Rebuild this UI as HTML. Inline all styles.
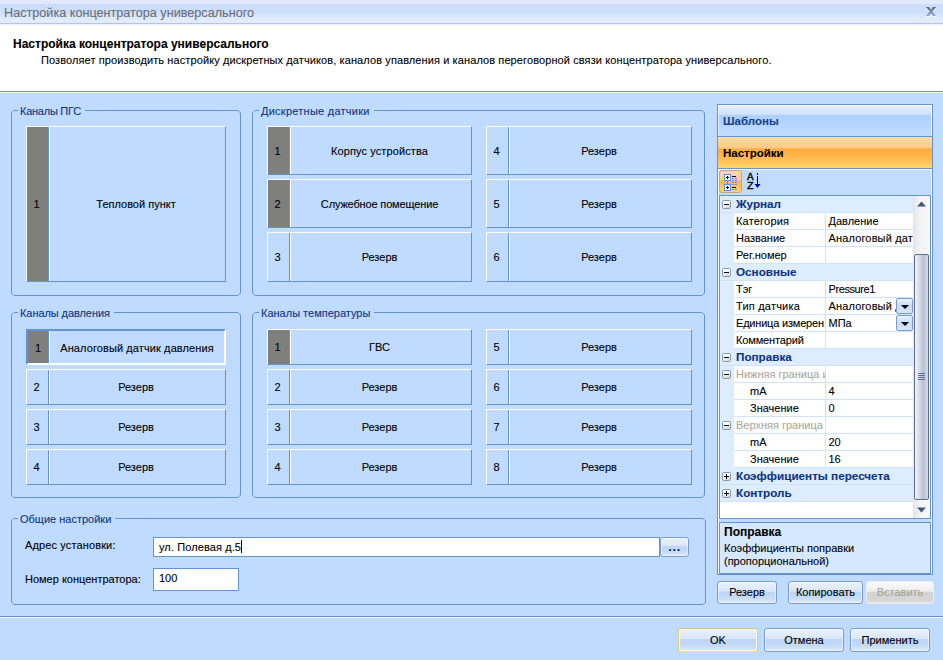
<!DOCTYPE html>
<html lang="ru"><head><meta charset="utf-8"><title>Настройка концентратора универсального</title>
<style>
html,body{margin:0;padding:0}
body{width:943px;height:660px;position:relative;overflow:hidden;background:#BFDBFF;font-family:"Liberation Sans",sans-serif;font-size:11px;color:#000;line-height:13px;-webkit-text-stroke:0.1px}
div,span{box-sizing:border-box}
.abs{position:absolute}
.t{position:absolute;white-space:nowrap}
.gb{position:absolute;border:1px solid #6593CF;border-radius:4px}
.gl{position:absolute;background:#BFDBFF;color:#10357C;white-space:nowrap;padding:0 4px 0 2px;height:13px}
.cb{position:absolute;border-style:solid;border-width:1px;border-color:#fff #6593CF #6593CF #fff}
.cb.sel{border-width:2px;border-color:#6593CF #fff #fff #6593CF}
.cb .n{position:absolute;left:0;top:0;bottom:0;width:22px;border-right:1px solid #6593CF;display:flex;align-items:center;justify-content:center;padding-right:2px}
.cb.sel .n{width:21px}
.cb .n.g{background:#7F807D}
.cb .x{position:absolute;left:22px;top:0;bottom:0;right:0;border-left:1px solid #fff;display:flex;align-items:center;justify-content:center;white-space:nowrap;padding-right:3px}
.cb.sel .x{left:21px;padding:2px 0 0 0}
.cb.sel .n{padding:2px 0 0 0}
.btn{position:absolute;border:1px solid #7B9CCB;border-radius:3px;background:linear-gradient(#EAF2FE 0%,#D9E6FA 44%,#BDD5F6 48%,#C5DAF8 75%,#DDE9FC 100%);display:flex;align-items:center;justify-content:center;white-space:nowrap;box-shadow:inset 0 0 0 1px rgba(255,255,255,.55)}
.row{position:absolute;left:0;width:193px;height:17px}
.cat{background:#DDECFE;color:#0E3482;font-weight:bold;font-size:11.7px}
.pm{position:absolute;left:2px;top:4px;width:9px;height:9px;border:1px solid #7F9DB9;border-radius:1.5px;background:linear-gradient(160deg,#fff 35%,#D8CDB4)}
.pm:before{content:"";position:absolute;left:1px;top:3px;width:5px;height:1px;background:#000}
.pm.p:after{content:"";position:absolute;left:3px;top:1px;width:1px;height:5px;background:#000}
.lab{position:absolute;left:14px;top:0;width:92px;height:17px;background:#fff;border-right:1px solid #D0E3FB;border-bottom:1px solid #D0E3FB;padding:2px 0 0 2px;overflow:hidden;white-space:nowrap}
.val{position:absolute;left:106px;top:0;width:87px;height:17px;background:#fff;border-bottom:1px solid #D0E3FB;padding:2px 0 0 2.5px;overflow:hidden;white-space:nowrap}
.lab.i{padding-left:16px}
.lab.d{color:#ACA899}
.dd{position:absolute;right:0px;top:0px;width:17px;height:16px;border:1px solid #7B9CCB;border-radius:2px;background:linear-gradient(#EAF2FE,#C7DBF9 50%,#D9E7FC)}
.dd:after{content:"";position:absolute;left:4px;top:6px;border:4px solid transparent;border-top-color:#000;border-bottom-width:0}
</style></head><body>

<div class="abs" style="left:0;top:0;width:943px;height:25px;background:linear-gradient(#E1E9FA 0,#E1E9FA 4px,#CBDDFA 4px,#CDDFFB 12px,#DFE9FB 18px,#E4ECFB 22px,#E4ECFB 23px,#A9C8F2 23px,#A9C8F2 24px,#E6F0FD 24px)"></div>
<div class="t" style="left:4px;top:6px;font-size:12.65px;line-height:15px;color:#6A6F78">Настройка концентратора универсального</div>
<svg class="abs" style="left:925px;top:6px" width="12" height="12" viewBox="0 0 12 12"><defs><linearGradient id="xg" x1="0" y1="0" x2="0" y2="1"><stop offset="0" stop-color="#5E5E5E"/><stop offset="0.35" stop-color="#7687A6"/><stop offset="1" stop-color="#8DA9D8"/></linearGradient></defs><path id="xp" d="M1 2h3l2 2.600 2-2.600h3l-3.500 4.500 3.500 4.500h-3l-2-2.600-2 2.600h-3l3.500-4.500z" fill="#fff"/><path d="M1 1h3l2 2.600 2-2.600h3l-3.500 4.500 3.500 4.500h-3l-2-2.600-2 2.600h-3l3.500-4.500z" fill="url(#xg)"/></svg>
<div class="abs" style="left:0;top:25px;width:943px;height:66px;background:#fff"></div>
<div class="abs" style="left:0;top:91px;width:943px;height:1px;background:#6593CF"></div>
<div class="abs" style="left:0;top:92px;width:943px;height:1px;background:#fff"></div>
<div class="t" style="left:13px;top:38px;font-weight:bold;font-size:12px">Настройка концентратора универсального</div>
<div class="t" style="left:41px;top:54px;letter-spacing:0.1px">Позволяет производить настройку дискретных датчиков, каналов упавления и каналов переговорной связи концентратора универсального.</div>
<div class="abs" style="left:0;top:616px;width:943px;height:1px;background:#6593CF"></div>
<div class="abs" style="left:0;top:617px;width:943px;height:1px;background:#fff"></div>
<svg class="abs" style="left:11px;top:110px" width="230" height="186" viewBox="0 0 230 186"><path d="M3.0 .5H227.0L229.5 3.0V183.0L227.0 185.5H3.0L.5 183.0V3.0Z" fill="none" stroke="#6593CF" stroke-width="1"/></svg>
<div class="gl" style="left:18px;top:105px;letter-spacing:-0.25px">Каналы ПГС</div>
<svg class="abs" style="left:252px;top:110px" width="453" height="186" viewBox="0 0 453 186"><path d="M3.0 .5H450.0L452.5 3.0V183.0L450.0 185.5H3.0L.5 183.0V3.0Z" fill="none" stroke="#6593CF" stroke-width="1"/></svg>
<div class="gl" style="left:259px;top:105px;letter-spacing:0.25px">Дискретные датчики</div>
<svg class="abs" style="left:11px;top:312px" width="230" height="186" viewBox="0 0 230 186"><path d="M3.0 .5H227.0L229.5 3.0V183.0L227.0 185.5H3.0L.5 183.0V3.0Z" fill="none" stroke="#6593CF" stroke-width="1"/></svg>
<div class="gl" style="left:18px;top:307px;letter-spacing:-0.07px">Каналы давления</div>
<svg class="abs" style="left:252px;top:312px" width="453" height="186" viewBox="0 0 453 186"><path d="M3.0 .5H450.0L452.5 3.0V183.0L450.0 185.5H3.0L.5 183.0V3.0Z" fill="none" stroke="#6593CF" stroke-width="1"/></svg>
<div class="gl" style="left:259px;top:307px;letter-spacing:0px">Каналы температуры</div>
<svg class="abs" style="left:11px;top:518px" width="695" height="87" viewBox="0 0 695 87"><path d="M3.0 .5H692.0L694.5 3.0V84.0L692.0 86.5H3.0L.5 84.0V3.0Z" fill="none" stroke="#6593CF" stroke-width="1"/></svg>
<div class="gl" style="left:18px;top:513px;letter-spacing:0px">Общие настройки</div>
<div class="cb" style="left:26px;top:126px;width:200px;height:156px"><div class="n g">1</div><div class="x">Тепловой пункт</div></div>
<div class="cb" style="left:267px;top:126px;width:205px;height:49px"><div class="n g" style="padding-top:2px">1</div><div class="x" style="padding-top:2px"><span style="letter-spacing:0.1px">Корпус устройства</span></div></div>
<div class="cb" style="left:486px;top:126px;width:206px;height:49px"><div class="n" style="padding-top:2px">4</div><div class="x" style="padding-top:2px">Резерв</div></div>
<div class="cb" style="left:267px;top:179px;width:205px;height:49px"><div class="n g" style="padding-top:2px">2</div><div class="x" style="padding-top:2px"><span style="letter-spacing:-0.15px">Служебное помещение</span></div></div>
<div class="cb" style="left:486px;top:179px;width:206px;height:49px"><div class="n" style="padding-top:2px">5</div><div class="x" style="padding-top:2px">Резерв</div></div>
<div class="cb" style="left:267px;top:232px;width:205px;height:50px"><div class="n">3</div><div class="x">Резерв</div></div>
<div class="cb" style="left:486px;top:232px;width:206px;height:50px"><div class="n">6</div><div class="x">Резерв</div></div>
<div class="cb sel" style="left:26px;top:329px;width:200px;height:36px"><div class="n g">1</div><div class="x"><span style="letter-spacing:0.1px">Аналоговый датчик давления</span></div></div>
<div class="cb" style="left:267px;top:329px;width:205px;height:36px"><div class="n g">1</div><div class="x">ГВС</div></div>
<div class="cb" style="left:486px;top:329px;width:206px;height:36px"><div class="n">5</div><div class="x">Резерв</div></div>
<div class="cb" style="left:26px;top:369px;width:200px;height:36px"><div class="n">2</div><div class="x">Резерв</div></div>
<div class="cb" style="left:267px;top:369px;width:205px;height:36px"><div class="n">2</div><div class="x">Резерв</div></div>
<div class="cb" style="left:486px;top:369px;width:206px;height:36px"><div class="n">6</div><div class="x">Резерв</div></div>
<div class="cb" style="left:26px;top:409px;width:200px;height:36px"><div class="n">3</div><div class="x">Резерв</div></div>
<div class="cb" style="left:267px;top:409px;width:205px;height:36px"><div class="n">3</div><div class="x">Резерв</div></div>
<div class="cb" style="left:486px;top:409px;width:206px;height:36px"><div class="n">7</div><div class="x">Резерв</div></div>
<div class="cb" style="left:26px;top:449px;width:200px;height:36px"><div class="n">4</div><div class="x">Резерв</div></div>
<div class="cb" style="left:267px;top:449px;width:205px;height:36px"><div class="n">4</div><div class="x">Резерв</div></div>
<div class="cb" style="left:486px;top:449px;width:206px;height:36px"><div class="n">8</div><div class="x">Резерв</div></div>
<div class="t" style="left:25px;top:539px;letter-spacing:0.13px">Адрес установки:</div>
<div class="t" style="left:25px;top:573px">Номер концентратора:</div>
<div class="abs" style="left:153px;top:537px;width:507px;height:20px;background:#fff;border:1px solid #6593CF"></div>
<div class="t" style="left:159px;top:541px;letter-spacing:0.1px">ул. Полевая д.5</div>
<div class="abs" style="left:241px;top:540px;width:1px;height:13px;background:#000"></div>
<div class="abs" style="left:153px;top:568px;width:86px;height:23px;background:#fff;border:1px solid #6593CF"></div>
<div class="t" style="left:159px;top:572px">100</div>
<div class="btn" style="left:660px;top:537px;width:29px;height:20px;font-weight:bold;letter-spacing:1.2px;padding-left:1px">...</div>
<div class="btn" style="left:678px;top:628px;width:80px;height:24px;border-color:#D6BC82 #E6CC74 #FBE168 #E6CC74;box-shadow:inset 0 0 0 1px #FFF9DC">OK</div>
<div class="btn" style="left:764px;top:628px;width:80px;height:24px">Отмена</div>
<div class="btn" style="left:850px;top:628px;width:80px;height:24px">Применить</div>
<div class="btn" style="left:717px;top:581px;width:60px;height:23px">Резерв</div>
<div class="btn" style="left:788px;top:581px;width:75px;height:23px">Копировать</div>
<div class="btn" style="left:866px;top:581px;width:68px;height:23px;color:#A9A594;border-color:#EDEDEE;box-shadow:none;background:linear-gradient(#FAFAFA,#EEEEEE 44%,#D3D3D3 48%,#D6D6D6 88%,#E8E8E8)">Вставить</div>
<div class="abs" style="left:717px;top:104px;width:216px;height:471px;border:1px solid #6593CF"></div>
<div class="abs" style="left:718px;top:105px;width:214px;height:31px;background:linear-gradient(#E3EEFF 0,#D2E3FF 8px,#C8DEFF 9px,#ACD0FF 9px,#C3DCFF 31px);border-left:1px solid rgba(255,255,255,.6);border-top:1px solid #fff;border-right:1px solid rgba(255,255,255,.8)"></div>
<div class="abs" style="left:718px;top:136px;width:214px;height:1px;background:#6593CF"></div>
<div class="t" style="left:723px;top:115px;font-weight:bold;font-size:11.5px;color:#15428B">Шаблоны</div>
<div class="abs" style="left:718px;top:137px;width:214px;height:31px;background:linear-gradient(#FFDBAC 0,#FFC981 11px,#FFAB3E 12px,#FFB448 18px,#FFD468 31px)"></div>
<div class="abs" style="left:718px;top:168px;width:214px;height:1px;background:#6593CF"></div>
<div class="t" style="left:723px;top:147px;font-weight:bold;font-size:11.5px">Настройки</div>
<div class="abs" style="left:718px;top:169px;width:214px;height:26px;background:#C1DCFF;border-top:1px solid #fff;border-left:1px solid #fff"></div>
<div class="abs" style="left:719px;top:170px;width:23px;height:23px;border:1px solid #C9A56E;border-radius:3px;background:linear-gradient(#FFDCA6 0,#FFCB82 9px,#FFB548 10px,#FFD27A 21px)"></div>
<svg class="abs" style="left:723px;top:173px" width="17" height="18" viewBox="0 0 17 18" shape-rendering="crispEdges">
<rect x="1.5" y="1.5" width="6" height="6" fill="#fff" stroke="#5B8EDB"/><rect x="1.5" y="11.5" width="6" height="6" fill="#fff" stroke="#5B8EDB"/>
<path d="M4.5 8v3" stroke="#5B8EDB"/><path d="M3 4.5h3M4.5 3v3M3 14.500h3M4.500 13v3" stroke="#000"/>
<path d="M9 3.500h4M9 14.500h4" stroke="#000"/>
<path d="M9 5.500h6M9 7.500h6M9 9.500h6M9 11.500h6M9 16.500h6" stroke="#5B8EDB" stroke-dasharray="2 1"/></svg>
<div class="t" style="left:747px;top:173px;font-size:11px;line-height:9px;-webkit-text-stroke:0.35px;font-family:'Liberation Mono',monospace">A</div>
<div class="t" style="left:747px;top:182px;font-size:11px;line-height:9px;-webkit-text-stroke:0.35px;font-family:'Liberation Mono',monospace">Z</div>
<svg class="abs" style="left:754px;top:172px" width="8" height="18" viewBox="0 0 8 18"><path d="M3.5 1v2M3.5 4v10" stroke="#00008B" stroke-width="1"/><path d="M0.500 12h6l-3 4z" fill="#00008B"/></svg>
<div class="abs" style="left:719px;top:195px;width:212px;height:324px;border:1px solid #6593CF;background:#fff"></div>
<div class="abs" style="left:720px;top:196px;width:193px;height:306px;background:#DDECFE"></div>
<div class="abs" style="left:720px;top:196px;width:193px;height:306px">
<div class="row cat" style="top:0px;border-bottom:1px solid #D0E3FB"><span class="pm"></span><span class="t" style="left:16px;top:1px">Журнал</span></div>
<div class="row" style="top:17px"><div class="lab"><span style='letter-spacing:.2px'>Категория</span></div><div class="val">Давление</div></div>
<div class="row" style="top:34px"><div class="lab">Название</div><div class="val"><span style='letter-spacing:.15px'>Аналоговый дат</span></div></div>
<div class="row" style="top:51px"><div class="lab">Рег.номер</div><div class="val"></div></div>
<div class="row cat" style="top:68px;border-bottom:1px solid #D0E3FB"><span class="pm"></span><span class="t" style="left:16px;top:1px">Основные</span></div>
<div class="row" style="top:85px"><div class="lab">Тэг</div><div class="val"><span style='letter-spacing:-.4px'>Pressure1</span></div></div>
<div class="row" style="top:102px"><div class="lab"><span style='letter-spacing:.2px'>Тип датчика</span></div><div class="val"><span style='letter-spacing:.15px'>Аналоговый д</span><span class="dd"></span></div></div>
<div class="row" style="top:119px"><div class="lab"><span style='letter-spacing:-.2px'>Единица измерен</span></div><div class="val">МПа<span class="dd"></span></div></div>
<div class="row" style="top:136px"><div class="lab"><span style='letter-spacing:-.15px'>Комментарий</span></div><div class="val"></div></div>
<div class="row cat" style="top:153px;border-bottom:1px solid #D0E3FB"><span class="pm"></span><span class="t" style="left:16px;top:1px">Поправка</span></div>
<div class="row" style="top:170px"><span class="pm"></span><div class="lab d">Нижняя граница и</div><div class="val"></div></div>
<div class="row" style="top:187px"><div class="lab i">mA</div><div class="val">4</div></div>
<div class="row" style="top:204px"><div class="lab i">Значение</div><div class="val">0</div></div>
<div class="row" style="top:221px"><span class="pm"></span><div class="lab d">Верхняя граница</div><div class="val"></div></div>
<div class="row" style="top:238px"><div class="lab i">mA</div><div class="val">20</div></div>
<div class="row" style="top:255px"><div class="lab i">Значение</div><div class="val">16</div></div>
<div class="row cat" style="top:272px;border-bottom:1px solid #D0E3FB"><span class="pm p"></span><span class="t" style="left:16px;top:1px">Коэффициенты пересчета</span></div>
<div class="row cat" style="top:289px;border-bottom:1px solid #D0E3FB"><span class="pm p"></span><span class="t" style="left:16px;top:1px">Контроль</span></div>
</div>
<div class="abs" style="left:913px;top:196px;width:17px;height:322px;background:linear-gradient(90deg,#E3E4EA,#F4F4F6 40%,#F8F8F8)"></div>
<svg class="abs" style="left:917px;top:201px" width="10" height="6"><path d="M0 5.500L4.500 0.500L9 5.500z" fill="#3F5680"/></svg>
<svg class="abs" style="left:917px;top:507px" width="10" height="6"><path d="M0 0.500L4.500 5.500L9 0.500z" fill="#3F5680"/></svg>
<div class="abs" style="left:914px;top:254px;width:15px;height:246px;border:1px solid #5E6E90;border-radius:2px;background:linear-gradient(90deg,#F2F4F8,#CDD3E0 45%,#B8C0D2 60%,#D5DAE6)"></div>
<div class="abs" style="left:918px;top:373px;width:7px;height:7px;background:repeating-linear-gradient(#5E6E90 0,#5E6E90 1px,transparent 1px,transparent 2px)"></div>
<div class="abs" style="left:718px;top:169px;width:214px;height:405px;border:1px solid #fff;border-bottom:none"></div>
<div class="abs" style="left:719px;top:522px;width:212px;height:52px;border:1px solid #6593CF;background:#D6E8FE"></div>
<div class="t" style="left:724px;top:526px;font-weight:bold;font-size:12px">Поправка</div>
<div class="t" style="left:724px;top:542px">Коэффициенты поправки</div>
<div class="t" style="left:724px;top:555px">(пропорциональной)</div>
</body></html>
